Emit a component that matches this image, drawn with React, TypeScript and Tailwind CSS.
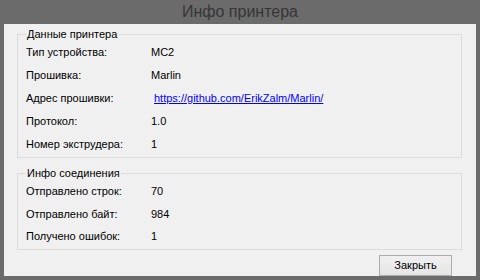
import React from 'react'

const printerRows = [
  { label: 'Тип устройства:', value: 'MC2' },
  { label: 'Прошивка:', value: 'Marlin' },
  { label: 'Адрес прошивки:', value: 'https://github.com/ErikZalm/Marlin/', link: true },
  { label: 'Протокол:', value: '1.0' },
  { label: 'Номер экструдера:', value: '1' },
]

const connRows = [
  { label: 'Отправлено строк:', value: '70' },
  { label: 'Отправлено байт:', value: '984' },
  { label: 'Получено ошибок:', value: '1' },
]

type Row = { label: string; value: string; link?: boolean }

function Group({ title, rows, rowH }: { title: string; rows: Row[]; rowH: string }) {
  return (
    <fieldset className="border border-[#dcdcdc] pl-[8px] pb-[1px]">
      <legend className="px-[1px] text-[11px] leading-[14px]">{title}</legend>
      <div className="flex flex-col">
        {rows.map((r) => (
          <div key={r.label} className={`flex items-center ${rowH}`}>
            <span className="w-[125px] shrink-0">{r.label}</span>
            {r.link ? (
              <a href="#" className="ml-[3px] text-[#0000ff] underline">
                {r.value}
              </a>
            ) : (
              <span>{r.value}</span>
            )}
          </div>
        ))}
      </div>
    </fieldset>
  )
}

export default function App() {
  return (
    <div
      className="w-[480px] h-[280px] bg-[#6b6b6b] flex flex-col text-black"
      style={{ fontFamily: '"Liberation Sans", Arial, sans-serif' }}
    >
      <div className="h-[24px] flex items-center justify-center text-[16px] text-[#363636] leading-none">
        Инфо принтера
      </div>
      <div className="mx-[4px] h-[252px] bg-[#f0f0f0] flex flex-col text-[11px] px-[13px] pr-[14px] pt-[3px]">
        <Group title="Данные принтера" rows={printerRows} rowH="h-[23px]" />
        <div className="h-[8px]" />
        <Group title="Инфо соединения" rows={connRows} rowH="h-[22.5px]" />
        <div className="flex justify-end mt-[5px] pr-[10px]">
          <button className="w-[73px] h-[21px] border border-[#adadad] bg-gradient-to-b from-[#f0f0f0] to-[#e5e5e5] text-[11px] text-black">
            Закрыть
          </button>
        </div>
      </div>
    </div>
  )
}
